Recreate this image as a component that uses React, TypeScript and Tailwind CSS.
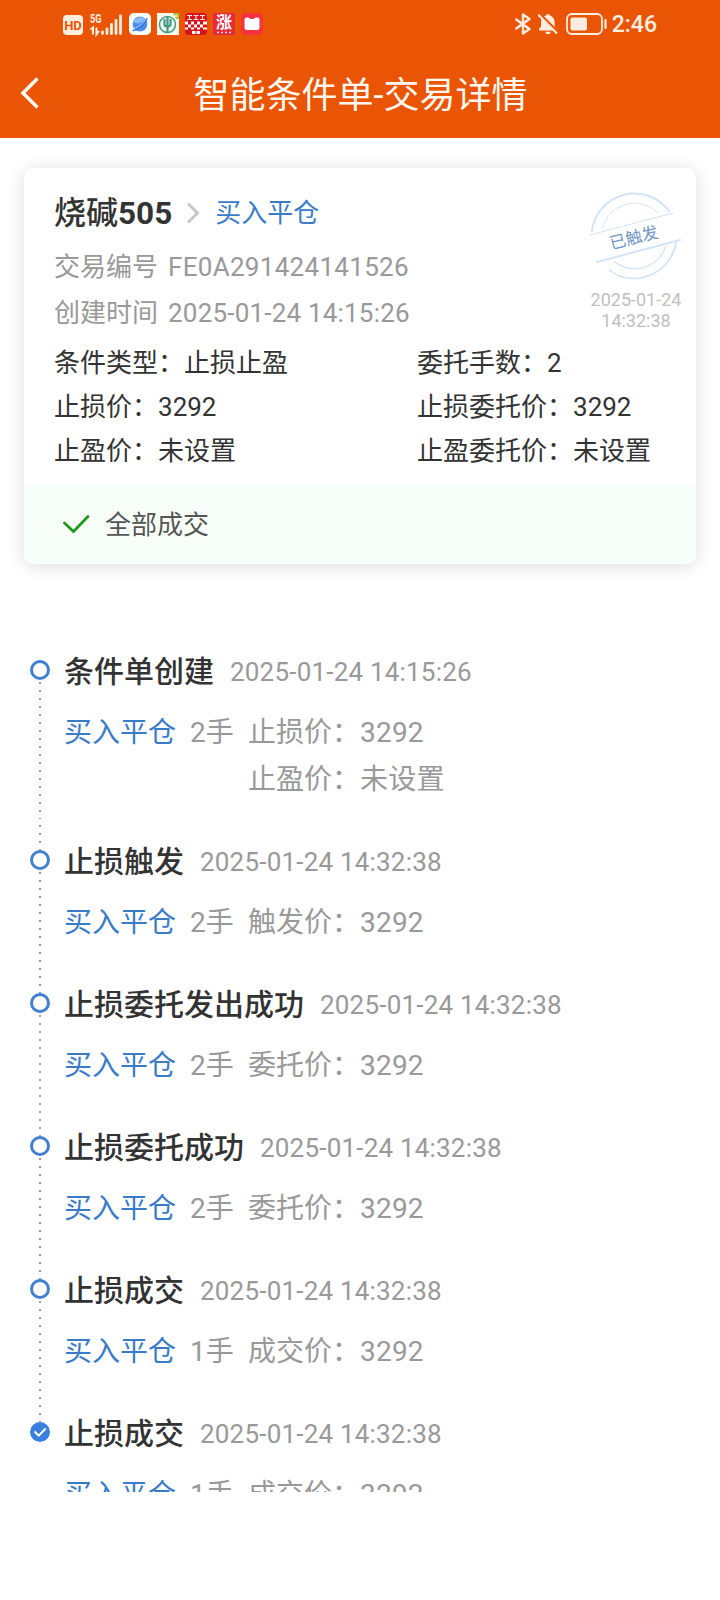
import { ReactNode } from 'react'

interface TimelineStep {
  title: string
  time: string
  lots: string
  prices: { label: string; value: string }[]
  done?: boolean
}

const steps: TimelineStep[] = [
  {
    title: '条件单创建',
    time: '2025-01-24 14:15:26',
    lots: '2',
    prices: [
      { label: '止损价：', value: '3292' },
      { label: '止盈价：', value: '未设置' },
    ],
  },
  { title: '止损触发', time: '2025-01-24 14:32:38', lots: '2', prices: [{ label: '触发价：', value: '3292' }] },
  { title: '止损委托发出成功', time: '2025-01-24 14:32:38', lots: '2', prices: [{ label: '委托价：', value: '3292' }] },
  { title: '止损委托成功', time: '2025-01-24 14:32:38', lots: '2', prices: [{ label: '委托价：', value: '3292' }] },
  { title: '止损成交', time: '2025-01-24 14:32:38', lots: '1', prices: [{ label: '成交价：', value: '3292' }] },
  { title: '止损成交', time: '2025-01-24 14:32:38', lots: '1', prices: [{ label: '成交价：', value: '3292' }], done: true },
]

const conditions = [
  ['条件类型：', '止损止盈', '委托手数：', '2'],
  ['止损价：', '3292', '止损委托价：', '3292'],
  ['止盈价：', '未设置', '止盈委托价：', '未设置'],
]

const Num = ({ children }: { children: ReactNode }) => <span className="tracking-[0.2px]">{children}</span>

const StatusBar = () => (
  <div className="flex h-12 items-center pl-[63px] pr-[63px] text-[#ffeee0]">
    {/* Network */}
    <svg className="overflow-visible" width="60" height="24" viewBox="0 0 60 24">
      <rect x="0" y="3" width="20" height="20" rx="4" fill="#ffeee0" />
      <text x="10" y="17.8" fontSize="13" fontWeight="700" textAnchor="middle" fill="#e95504" fontFamily="Roboto, sans-serif">
        HD
      </text>
      <text x="27" y="11.2" fontSize="12.5" fontWeight="700" textLength="11.5" lengthAdjust="spacingAndGlyphs" fill="#ffeee0" fontFamily="Roboto, sans-serif">
        5G
      </text>
      <path d="M27.5 17.5 30 15.500v7M33.500 15.500v7l2.500-3.500" fill="none" stroke="#ffeee0" strokeWidth="2" />
      <path d="M39.500 20v1.500M44 17v4.500M48.500 12.500v9M53 8.500v13M57.500 4v17.500" stroke="#ffeee0" strokeWidth="2.800" strokeLinecap="round" />
    </svg>

    {/* Notification icons */}
    <div className="ml-[6px] flex gap-[6px]">
      <svg width="22" height="22" viewBox="0 0 22 22">
        <rect width="22" height="22" rx="5" fill="#fff" />
        <circle cx="11" cy="11" r="7.4" fill="#4b8eea" />
        <path d="M4 9c3-5 8-6 12-3-3 4-7 6-12 3Z" fill="#86bcf7" />
        <path d="M3.500 17.500c4 .5 13-6 14.500-12.500" fill="none" stroke="#3a78dd" strokeWidth="1.400" />
        <path d="M4.500 15.500C10 14 15 9.500 17 5.500" fill="none" stroke="#b9d7fb" strokeWidth="0.800" />
      </svg>
      <svg width="22" height="22" viewBox="0 0 22 22">
        <rect width="22" height="22" fill="#f6f6ea" />
        <circle cx="10.500" cy="11.500" r="8" fill="none" stroke="#3f9b86" strokeWidth="1.500" />
        <path d="M7.500 6v5.500q0 2 3 2t3-2V6M10.500 3v17" fill="none" stroke="#3f9b86" strokeWidth="2.200" />
        <path d="M16 0h6v6h-3z" fill="#a5c83a" />
        <circle cx="19" cy="3" r="1.300" fill="#e9f3c0" />
      </svg>
      <svg width="22" height="22" viewBox="0 0 22 22">
        <rect width="22" height="22" rx="4" fill="#d7101c" />
        <path d="M2 2.500h5M8.500 2.500h5M15 2.500h5M2 6.500h5M8.500 6.500h5M15 6.500h5M4.500 2v5M11 2v5M17.500 2v5" stroke="#fbe3dc" strokeWidth="1.200" />
        <path
          d="M0 8.500h3v3H0zM6 8.500h3v3H6zM12 8.500h3v3h-3zM18 8.500h4v3h-4zM3 11.500h3v3H3zM9 11.500h3v3H9zM15 11.500h3v3h-3zM0 14.500h3v2H0zM6 14.500h3v2H6zM12 14.500h3v2h-3zM18 14.500h4v2h-4z"
          fill="#fff"
        />
        <path d="M7 18h3.500v3H7zM11.500 18H15v3h-3.500z" fill="#fff" />
      </svg>
      <svg className="overflow-visible" width="22" height="22" viewBox="0 0 22 22">
        <rect width="22" height="22" fill="#e52a3c" />
        <text x="11" y="15" fontSize="16" fontWeight="700" textAnchor="middle" fill="#fff" fontFamily="Noto Sans CJK SC, sans-serif">
          涨
        </text>
        <path d="M4 19.500h2M8 19.500h2M12 19.500h2M16 19.500h2" stroke="#fbd3d3" strokeWidth="1.500" />
      </svg>
      <svg width="22" height="22" viewBox="0 0 22 22">
        <rect width="22" height="22" rx="5" fill="#f5333f" />
        <path d="M3.500 6.500q0-2 2-2h2q1 1.500 3.500 1.500t3.500-1.500h2q2 0 2 2v8q0 2.500-2.500 2.500H6q-2.500 0-2.500-2.500Z" fill="#fff" />
      </svg>
    </div>

    {/* System icons */}
    <div className="ml-auto flex items-center">
      <svg width="18" height="22" viewBox="0 0 18 22" fill="none" stroke="currentColor" strokeWidth="2.400">
        <path d="m1.500 6 14 10L9 20.500v-19L15.500 6l-14 10" strokeLinejoin="round" />
      </svg>
      <svg className="ml-[6px]" width="20" height="22" viewBox="0 0 20 22">
        <path d="M10 1a2 2 0 0 1 2 1.600c3 .9 4.600 3.400 4.600 6.400v4.500l2 2.500v1.500H1V16l2-2.500V9c0-3 2-5.500 5-6.400A2 2 0 0 1 10 1Z" fill="currentColor" />
        <path d="M7.500 18.800h5a2.500 2.500 0 0 1-5 0Z" fill="currentColor" />
        <path d="M1.500.5 20 19" stroke="#e95504" strokeWidth="2.500" />
        <path d="M0 1.500 19 20.500" stroke="currentColor" strokeWidth="2" />
      </svg>
      <svg className="ml-[8px]" width="41" height="22" viewBox="0 0 41 22">
        <rect x="1" y="1" width="35" height="20" rx="5" fill="none" stroke="currentColor" strokeWidth="1.800" />
        <rect x="4.500" y="4.500" width="16.500" height="13" rx="2" fill="currentColor" />
        <path d="M39.500 7v8" stroke="currentColor" strokeWidth="2.200" strokeLinecap="round" />
      </svg>
      <span className="ml-[5px] pt-[2px] text-[23px] leading-6 font-medium">2:46</span>
    </div>
  </div>
)

const Stamp = () => (
  <svg width="100" height="100" viewBox="586 186 100 100" fill="none" stroke="#d3e3f6" strokeLinecap="round">
    <path d="M591.800 231A43 43 0 0 1 669 211" strokeWidth="2" />
    <path d="M602.500 228A33 33 0 0 1 658 213" strokeWidth="1" strokeDasharray="14 1.500 7 2" />
    <path d="M590 235 673 213" strokeWidth="1.200" strokeDasharray="33 2 60" />
    <path d="M597 262 680 240" strokeWidth="2" />
    <path d="M676 243A43 43 0 0 1 618 275.500" strokeWidth="1.800" strokeDasharray="40 2 12 2 3 2" />
    <path d="M616 274.500 608 269" strokeWidth="1.500" strokeDasharray="3 2" />
    <path d="M666 246A33 33 0 0 1 614 261.500" strokeWidth="1.200" />
    <text
      x="634"
      y="243.500"
      fontSize="16.500"
      textAnchor="middle"
      fill="#6f96c6"
      stroke="none"
      transform="rotate(-14 634 238)"
      fontFamily="Noto Sans CJK SC, sans-serif"
    >
      已触发
    </text>
  </svg>
)

const OrderCard = () => (
  <section className="mx-6 mt-[30px] overflow-hidden rounded-[10px] bg-white shadow-[0_2px_18px_rgba(0,0,0,0.14)]">
    <div className="h-[316px] pl-[30px] text-[26px]">
      <div className="flex h-[166px] justify-between pr-[10px]">
        <div className="pt-[22px]">
          <div className="flex h-[46px] items-center text-[#333]">
            <span className="text-[32px] leading-[46px] font-medium">
              烧碱<span className="text-[31.500px] font-bold">505</span>
            </span>
            <svg className="ml-[14px]" width="14" height="22" viewBox="0 0 14 22" fill="none" stroke="#c8c8c8" strokeWidth="3">
              <path d="m2 1.500 9.500 9.500L2 20.500" />
            </svg>
            <span className="ml-[15px] leading-[46px] text-[#3a7bc8]">买入平仓</span>
          </div>
          <div className="mt-[8px] flex h-[46px] items-center gap-[10px] text-[#999]">
            <span>交易编号</span>
            <span className="tracking-[0.3px]">FE0A291424141526</span>
          </div>
          <div className="flex h-[46px] items-center gap-[10px] text-[#999]">
            <span>创建时间</span>
            <Num>2025-01-24 14:15:26</Num>
          </div>
        </div>
        <div className="flex w-[100px] flex-col items-center pt-[18px] text-center text-[18px] leading-[21px] text-[#c0c0c0]">
          <Stamp />
          <span className="mt-[3px]">2025-01-24</span>
          <span>14:32:38</span>
        </div>
      </div>
      <div className="pt-[7px] text-[#333]">
        {conditions.map(([label, value, label2, value2]) => (
          <div key={label} className="flex h-11 items-center">
            <span className="w-[363px]">
              {label}
              {value}
            </span>
            <span>
              {label2}
              {value2}
            </span>
          </div>
        ))}
      </div>
    </div>
    <div className="flex h-20 items-center bg-[#f7fff8] pl-[38px] text-[26px] text-[#555]">
      <svg width="28" height="20" viewBox="0 0 28 20" fill="none" stroke="#1f9a1f" strokeWidth="2.800" strokeLinecap="round">
        <path d="m2.500 9 9 8.500L26 2.500" />
      </svg>
      <span className="ml-[15px] pt-[3px]">全部成交</span>
    </div>
  </section>
)

const StepDot = ({ done }: { done?: boolean }) => (
  <svg className="shrink-0" width="20" height="20" viewBox="0 0 20 20" fill="none">
    {done ? (
      <>
        <circle cx="10" cy="10" r="10" fill="#3a7fdd" />
        <path d="m4.500 9.500 4.200 4.200 7-7.200" stroke="#fff" strokeWidth="2" />
      </>
    ) : (
      <circle cx="10" cy="10" r="8.500" stroke="#4080cf" strokeWidth="3" />
    )}
  </svg>
)

const Step = ({ step }: { step: TimelineStep }) => (
  <li className="flex">
    <div className="flex w-5 flex-col items-center">
      <StepDot done={step.done} />
      {!step.done && (
        <>
          <div className="mt-[2px] w-[2px] flex-1 bg-[repeating-linear-gradient(#999_0_2px,transparent_2px_8px)]" />
          <div className="mt-[6px] h-[25px] w-[2px] bg-[repeating-linear-gradient(#999_0_2px,transparent_2px_8px)]" />
        </>
      )}
    </div>
    <div className="ml-[14px] pb-[47px]">
      <div className="flex h-6 items-center gap-4">
        <span className="pb-[2px] text-[30px] font-medium text-[#333]">{step.title}</span>
        <span className="text-[26px] text-[#999]">
          <Num>{step.time}</Num>
        </span>
      </div>
      <div className="mt-[25px] flex text-[28px] leading-[47px] text-[#999]">
        <span className="text-[#3a7bc8]">买入平仓</span>
        <span className="ml-[14px] w-[58px]">{step.lots}手</span>
        <div>
          {step.prices.map((price) => (
            <div key={price.label}>
              {price.label}
              <Num>{price.value}</Num>
            </div>
          ))}
        </div>
      </div>
    </div>
  </li>
)

const App = () => {
  return (
    <div className="h-[1600px] w-[720px] overflow-hidden bg-white font-['Roboto','Noto_Sans_CJK_SC',sans-serif]">
      <header className="h-[138px] bg-[#e95504] text-[#fff8f0]">
        <StatusBar />
        <div className="flex h-[90px] items-center pl-5 pr-[39px]">
          <svg width="20" height="32" viewBox="0 0 20 32" fill="none" stroke="currentColor" strokeWidth="3.600">
            <path d="M17.500 1.500 3 16l14.500 14.500" />
          </svg>
          <h1 className="flex-1 pt-[5px] text-center text-[36px]">智能条件单-交易详情</h1>
        </div>
      </header>

      <OrderCard />

      <ol className="mt-[76px] ml-[30px] h-[852px] overflow-hidden pt-5">
        {steps.map((step, i) => (
          <Step key={i} step={step} />
        ))}
      </ol>
    </div>
  )
}

export default App
